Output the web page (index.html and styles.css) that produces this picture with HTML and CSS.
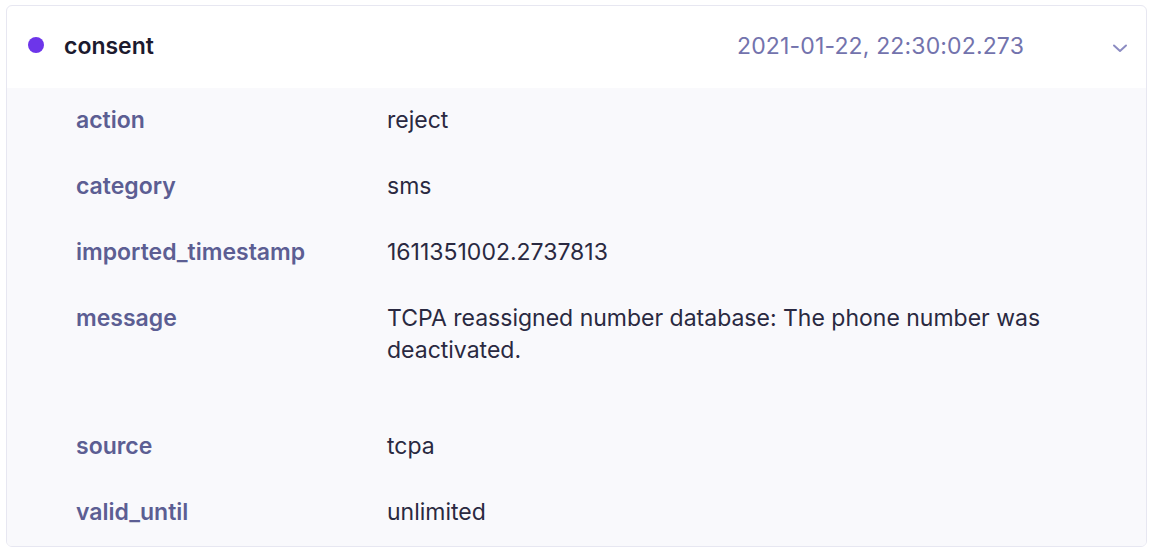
FILE: index.html
```html
<!DOCTYPE html>
<html>
<head>
<meta charset="utf-8">
<link rel="stylesheet" href="styles.css">
</head>
<body>
<div class="card">
  <div class="header">
    <span class="dot"></span>
    <span class="title">consent</span>
    <span class="time">2021-01-22, 22:30:02.273</span>
    <svg class="chev" width="16" height="14" viewBox="0 0 16 14"><path d="M2 4.5 L8 10 L14 4.5" fill="none" stroke="#8c8cc2" stroke-width="2" stroke-linecap="round" stroke-linejoin="round"/></svg>
  </div>
  <div class="body">
    <div class="row"><div class="key">action</div><div class="val">reject</div></div>
    <div class="row"><div class="key">category</div><div class="val">sms</div></div>
    <div class="row"><div class="key">imported_timestamp</div><div class="val">1611351002.2737813</div></div>
    <div class="row tall"><div class="key">message</div><div class="val">TCPA reassigned number database: The phone number was deactivated.</div></div>
    <div class="row"><div class="key">source</div><div class="val">tcpa</div></div>
    <div class="row"><div class="key">valid_until</div><div class="val">unlimited</div></div>
  </div>
</div>
</body>
</html>
```
FILE: styles.css
```css
html, body { margin: 0; padding: 0; background: #ffffff; }
body { font-family: Inter, "Noto Sans", sans-serif; padding: 5px 0 0 6px; }
.card {
  width: 1139px;
  border: 1px solid #e7e7f1;
  border-radius: 6px;
  overflow: hidden;
  background: #ffffff;
}
.header {
  height: 82px;
  display: flex;
  align-items: center;
  padding: 0 18px 0 21px;
}
.dot {
  width: 16px; height: 16px; border-radius: 50%;
  background: #6d35ea;
  margin-right: 20px;
  margin-top: -4px;
}
.title { font-size: 23px; font-weight: 600; color: #1c1a2e; margin-top: -2px; }
.time { margin-left: auto; font-size: 23px; color: #7373ad; margin-right: 88px; margin-top: -2px; letter-spacing: 0.15px; }
.chev { margin-top: 2px; }
.body { background: #f9f9fc; }
.row {
  display: grid;
  grid-template-columns: 311px 1fr;
  padding: 16px 0 18px 69px;
  line-height: 32px;
  font-size: 23px;
}
.row.tall { padding-bottom: 48px; }
.key { font-weight: 600; color: #5c5e93; }
.val { color: #2a2941; padding-right: 90px; }
```
